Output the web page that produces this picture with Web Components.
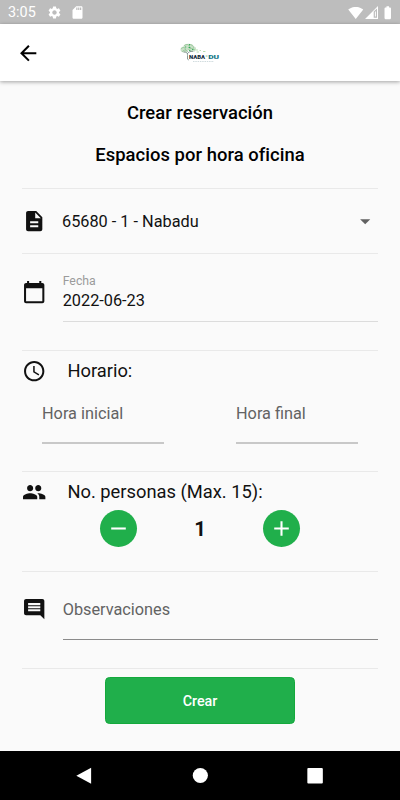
<!DOCTYPE html>
<html lang="es">
<head>
<meta charset="utf-8">
<meta name="viewport" content="width=device-width, initial-scale=1">
<title>Crear reservación</title>
<style>
  html, body { margin: 0; height: 100%; }
  body {
    background: #fafafa;
    color: #111;
    font-family: Roboto, "Liberation Sans", sans-serif;
    overflow: hidden;
  }
</style>
</head>
<body>
<reserva-screen></reserva-screen>

<script>
(() => {
  const ICONS = {
    back: 'M20 11H7.83l5.59-5.59L12 4l-8 8 8 8 1.41-1.41L7.83 13H20v-2z',
    file: 'M14 2H6c-1.1 0-1.99.9-1.99 2L4 20c0 1.1.89 2 1.99 2H18c1.1 0 2-.9 2-2V8l-6-6zm2 16H8v-2h8v2zm0-4H8v-2h8v2zm-3-5V3.5L18.5 9H13z',
    calendar: 'M20 3h-1V1h-2v2H7V1H5v2H4c-1.1 0-2 .9-2 2v16c0 1.1.9 2 2 2h16c1.1 0 2-.9 2-2V5c0-1.1-.9-2-2-2zm0 18H4V8h16v13z',
    clock: 'M11.99 2C6.47 2 2 6.48 2 12s4.47 10 9.99 10C17.52 22 22 17.52 22 12S17.52 2 11.99 2zM12 20c-4.42 0-8-3.58-8-8s3.58-8 8-8 8 3.58 8 8-3.58 8-8 8zm.5-13H11v6l5.25 3.15.75-1.23-4.5-2.67z',
    people: 'M16 11c1.66 0 2.99-1.34 2.99-3S17.66 5 16 5s-3 1.34-3 3 1.34 3 3 3zm-8 0c1.66 0 2.99-1.34 2.99-3S9.66 5 8 5 5 6.34 5 8s1.34 3 3 3zm0 2c-2.33 0-7 1.17-7 3.5V19h14v-2.5c0-2.33-4.67-3.5-7-3.5zm8 0c-.29 0-.62.02-.97.05 1.16.84 1.97 1.97 1.97 3.45V19h6v-2.5c0-2.33-4.67-3.5-7-3.5z',
    comment: 'M21.99 4c0-1.1-.89-2-1.99-2H4c-1.1 0-2 .9-2 2v12c0 1.1.9 2 2 2h14l4 4-.01-18zM18 14H6v-2h12v2zm0-3H6V9h12v2zm0-3H6V6h12v2z',
    minus: 'M19 13H5v-2h14v2z',
    plus: 'M19 13h-6v6h-2v-6H5v-2h6V5h2v6h6v2z',
    caret: 'M7 10l5 5 5-5z',
    settings: 'M19.14 12.94c.04-.3.06-.61.06-.94 0-.32-.02-.64-.07-.94l2.03-1.58c.18-.14.23-.41.12-.61l-1.92-3.32c-.12-.22-.37-.29-.59-.22l-2.39.96c-.5-.38-1.03-.7-1.62-.94l-.36-2.54c-.04-.24-.24-.41-.48-.41h-3.84c-.24 0-.43.17-.47.41l-.36 2.54c-.59.24-1.13.57-1.62.94l-2.39-.96c-.22-.08-.47 0-.59.22L2.74 8.87c-.12.21-.08.47.12.61l2.03 1.58c-.05.3-.09.63-.09.94s.02.64.07.94l-2.03 1.58c-.18.14-.23.41-.12.61l1.92 3.32c.12.22.37.29.59.22l2.39-.96c.5.38 1.03.7 1.62.94l.36 2.54c.05.24.24.41.48.41h3.84c.24 0 .44-.17.47-.41l.36-2.54c.59-.24 1.13-.56 1.62-.94l2.39.96c.22.08.47 0 .59-.22l1.92-3.32c.12-.22.07-.47-.12-.61l-2.01-1.58zM12 15.6c-1.98 0-3.6-1.62-3.6-3.6s1.62-3.6 3.6-3.6 3.6 1.62 3.6 3.6-1.62 3.6-3.6 3.6z',
    sdcard: 'M18 2h-8L4.02 8 4 20c0 1.1.9 2 2 2h12c1.1 0 2-.9 2-2V4c0-1.1-.9-2-2-2zm-6 6h-2V4h2v4zm3 0h-2V4h2v4zm3 0h-2V4h2v4z',
    wifi: 'M12.01 21.49L23.64 7c-.45-.34-4.93-4-11.64-4C5.28 3 .81 6.66.36 7l11.63 14.49.01.01.01-.01z',
    battery: 'M15.67 4H14V2h-4v2H8.33C7.6 4 7 4.6 7 5.33v15.33C7 21.4 7.6 22 8.33 22h7.33c.74 0 1.34-.6 1.34-1.33V5.33C17 4.6 16.4 4 15.67 4z',
  };

  function define(name, html, setup) {
    const template = document.createElement('template');
    template.innerHTML = html;
    customElements.define(name, class extends HTMLElement {
      constructor() {
        super();
        this.attachShadow({ mode: 'open' }).append(template.content.cloneNode(true));
      }

      connectedCallback() {
        if (setup) setup(this, this.shadowRoot);
      }
    });
  }

  define('reserva-icon', `
    <style>
      :host { display: block; flex: none; width: 24.4px; height: 24.4px; }
      svg { display: block; width: 100%; height: 100%; fill: currentColor; }
    </style>
    <svg viewBox="0 0 24 24" aria-hidden="true"><path></path></svg>
  `, (el, root) => {
    root.querySelector('path').setAttribute('d', ICONS[el.getAttribute('name')] || '');
  });

  define('status-bar', `
    <style>
      :host {
        display: flex;
        align-items: center;
        flex: none;
        box-sizing: border-box;
        height: 24px;
        padding: 1px 7px 0 8px;
        background: #bdbdbd;
        color: #fff;
      }
      .time { width: 39px; font-size: 14.4px; line-height: 24px; }
      .gear { width: 15px; height: 15px; }
      .card { width: 15px; height: 15px; margin-left: 8px; }
      .wifi { width: 15.5px; height: 15.5px; margin-left: auto; }
      .signal { width: 13px; height: 13px; margin-left: 1px; }
      .battery { width: 15.5px; height: 15.5px; margin-left: 2.5px; margin-right: -2.5px; }
    </style>
    <span class="time">3:05</span>
    <reserva-icon class="gear" name="settings"></reserva-icon>
    <reserva-icon class="card" name="sdcard"></reserva-icon>
    <reserva-icon class="wifi" name="wifi"></reserva-icon>
    <svg class="signal" viewBox="0 0 13 13" aria-hidden="true">
      <path fill="#fff" fill-rule="evenodd" d="M13 0v13H0zM8.7 5.5v6.3H12V2.5z"/>
      <path fill="#fff" d="M9.9 5.5h1v5h-1z"/>
    </svg>
    <reserva-icon class="battery" name="battery"></reserva-icon>
  `);

  define('nabadu-logo', `
    <style>
      :host { display: block; width: 42px; height: 22px; }
      svg { display: block; }
      text { font: 900 6px Roboto, sans-serif; }
    </style>
    <svg width="42" height="22" viewBox="0 0 42 22" role="img">
      <g fill="none" stroke-linecap="round">
        <g fill="#b5d3b1" stroke="none" opacity=".7">
          <ellipse cx="5.5" cy="7.5" rx="4" ry="3"/>
          <ellipse cx="9.5" cy="4.5" rx="5" ry="2.7"/>
          <ellipse cx="13.5" cy="7" rx="3.6" ry="2.8"/>
        </g>
        <path stroke="#7bb881" stroke-width=".6" d="M2.5 6.5c2-2 4-1 4 1M5.500 3.500c2-2 5-1 5 1M3.500 9.500c1-2 4-2 5 0M10.500 2.500c2 0 4 1 4 3M9.500 7.500c2-2 5-1 6 0"/>
        <path stroke="#1fa94a" stroke-width=".9" d="M10.500 2.500v.5M10 5.500h1M10.500 8.500h.5M13.500 7.500h.5M6.500 5h.3"/>
        <path stroke="#b7dcae" stroke-width="1" d="M17.500 8h1M18 10h1.500M21 8.500h.5M24.500 9.500h1.500"/>
        <path stroke="#657e77" stroke-width=".8" d="M5 10c3 0 3.500 1 3.500 3.500v3M8.500 11.500c1-2 3-2 5-2.200M8.500 17l1 .8"/>
      </g>
      <text x="10" y="17" fill="#122b3c" textLength="16" lengthAdjust="spacingAndGlyphs">NABA</text>
      <text x="26.3" y="17" fill="#75bd73" textLength="2.6" lengthAdjust="spacingAndGlyphs">°</text>
      <text x="29.2" y="17" fill="#167687" textLength="11" lengthAdjust="spacingAndGlyphs">DU</text>
      <path d="M14 19.500h21" stroke="#bccbd0" stroke-width=".7" stroke-dasharray="1.500 .8"/>
    </svg>
  `);

  define('app-bar', `
    <style>
      :host {
        display: grid;
        grid-template-columns: 1fr auto 1fr;
        align-items: center;
        flex: none;
        box-sizing: border-box;
        height: 57px;
        padding: 1px 16px 0;
        background: #fff;
        color: #000;
        box-shadow: 0 1px 4px rgba(0, 0, 0, .36);
        z-index: 1;
      }
    </style>
    <reserva-icon name="back"></reserva-icon>
    <slot></slot>
  `);

  define('form-section', `
    <style>
      :host {
        display: flex;
        flex-direction: column;
        box-sizing: border-box;
        border-top: 1px solid #e9e9e9;
      }
      .head { display: flex; align-items: center; }
      reserva-icon { margin-bottom: var(--icon-lift, 0); }
      .text { flex: 1; min-width: 0; margin-left: 16.3px; }
      :host([titled]) .head { height: 40px; }
      :host([titled]) .text { margin-left: 21px; font-size: 18.33px; line-height: 24px; }
      :host(:not([titled])) .head { flex: 1; }
    </style>
    <div class="head">
      <reserva-icon></reserva-icon>
      <div class="text"><slot name="main"></slot></div>
    </div>
    <slot></slot>
  `, (el, root) => {
    const icon = root.querySelector('reserva-icon');
    icon.setAttribute('name', el.getAttribute('icon'));
    icon.replaceWith(icon.cloneNode(true));
  });

  define('select-field', `
    <style>
      :host { display: flex; align-items: center; justify-content: space-between; font-size: 16.3px; }
      reserva-icon { color: #616161; }
    </style>
    <slot></slot>
    <reserva-icon name="caret"></reserva-icon>
  `);

  define('text-field', `
    <style>
      :host {
        display: flex;
        flex-direction: column;
        box-sizing: border-box;
        color: #636363;
        font-size: 16.3px;
        line-height: 19px;
        border-bottom: var(--line-width, 1px) solid var(--line, #8b8b8b);
      }
      .label { display: none; margin-bottom: 2px; font-size: 12.3px; line-height: 15px; color: #9b9b9b; }
      :host([label]) { color: #111; }
      :host([label]) .label { display: block; }
    </style>
    <span class="label"></span>
    <slot></slot>
  `, (el, root) => {
    root.querySelector('.label').textContent = el.getAttribute('label') || '';
  });

  define('people-stepper', `
    <style>
      :host { display: flex; align-items: center; justify-content: space-between; color: #111; }
      button {
        display: flex;
        align-items: center;
        justify-content: center;
        width: 37px;
        height: 37px;
        padding: 0;
        border: 0;
        border-radius: 50%;
        color: #fff;
        background: #20af4b;
      }
      reserva-icon { width: 25px; height: 25px; }
      .count { font-size: 20.4px; font-weight: 700; line-height: 24px; }
    </style>
    <button type="button" class="less" aria-label="Menos"><reserva-icon name="minus"></reserva-icon></button>
    <span class="count">1</span>
    <button type="button" class="more" aria-label="Más"><reserva-icon name="plus"></reserva-icon></button>
  `, (el, root) => {
    const count = root.querySelector('.count');
    const max = Number(el.getAttribute('max')) || 15;
    const step = (n) => {
      count.textContent = Math.min(max, Math.max(1, Number(count.textContent) + n));
    };
    root.querySelector('.less').onclick = () => step(-1);
    root.querySelector('.more').onclick = () => step(1);
  });

  define('primary-button', `
    <style>
      :host { display: block; }
      button {
        display: block;
        width: 100%;
        height: 100%;
        padding: 0;
        border: 1px solid #14a93c;
        border-radius: 4.5px;
        background: #20af4b;
        color: #fff;
        font: 500 14.3px/20px Roboto, sans-serif;
      }
    </style>
    <button type="button"><slot></slot></button>
  `);

  define('nav-bar', `
    <style>
      :host { display: flex; flex: none; height: 49px; background: #000; box-sizing: border-box; padding: 0 27px 0 26px; }
      svg { flex: 1; height: 49px; min-width: 0; fill: #fff; }
    </style>
    <svg viewBox="-24 0 48 49" aria-hidden="true"><path d="M7.3 16.8v16L-7.5 24.800z"/></svg>
    <svg viewBox="-24 0 48 49" aria-hidden="true"><circle cx=".5" cy="24.5" r="7.6"/></svg>
    <svg viewBox="-24 0 48 49" aria-hidden="true"><rect x="-7.5" y="17" width="15.5" height="15.5" rx="1"/></svg>
  `);

  define('reserva-screen', `
    <style>
      :host { display: flex; flex-direction: column; height: 800px; background: #fafafa; }
      main { flex: 1; box-sizing: border-box; padding: 20px 22px 0; }
      h1, h2 { margin: 0; font-size: 18.4px; font-weight: 500; line-height: 24px; letter-spacing: .06px; text-align: center; color: #000; }
      h2 { margin-top: 18px; margin-bottom: 21px; }
      .place { height: 65px; }
      .place select-field { margin-left: -.7px; padding-right: 1px; padding-top: 1px; }
      .date { height: 97px; --icon-lift: 20px; }
      .date text-field { height: 48px; margin-bottom: 8px; --line: #dcdcdc; }
      .time { height: 121px; }
      .hours { display: flex; justify-content: space-between; padding: 13px 20px 0; }
      .hours text-field { width: 122px; height: 40px; --line: #c8c8c8; --line-width: 2px; }
      .people { height: 100px; }
      people-stepper { padding: 0 78px; margin-top: -2px; }
      .notes { height: 97px; --icon-lift: 21px; }
      .notes text-field { height: 40px; margin-bottom: 1px; }
      .submit { display: flex; justify-content: center; border-top: 1px solid #e9e9e9; padding-top: 8px; }
      primary-button { width: 190px; height: 47px; }
    </style>
    <status-bar></status-bar>
    <app-bar><nabadu-logo></nabadu-logo></app-bar>
    <main>
      <h1>Crear reservación</h1>
      <h2>Espacios por hora oficina</h2>
      <form-section class="place" icon="file">
        <select-field slot="main">65680 - 1 - Nabadu</select-field>
      </form-section>
      <form-section class="date" icon="calendar">
        <text-field slot="main" label="Fecha">2022-06-23</text-field>
      </form-section>
      <form-section class="time" icon="clock" titled>
        <span slot="main">Horario:</span>
        <div class="hours">
          <text-field>Hora inicial</text-field>
          <text-field>Hora final</text-field>
        </div>
      </form-section>
      <form-section class="people" icon="people" titled>
        <span slot="main">No. personas (Max. 15):</span>
        <people-stepper max="15"></people-stepper>
      </form-section>
      <form-section class="notes" icon="comment">
        <text-field slot="main">Observaciones</text-field>
      </form-section>
      <div class="submit"><primary-button>Crear</primary-button></div>
    </main>
    <nav-bar></nav-bar>
  `);
})();
</script>
</body>
</html>
